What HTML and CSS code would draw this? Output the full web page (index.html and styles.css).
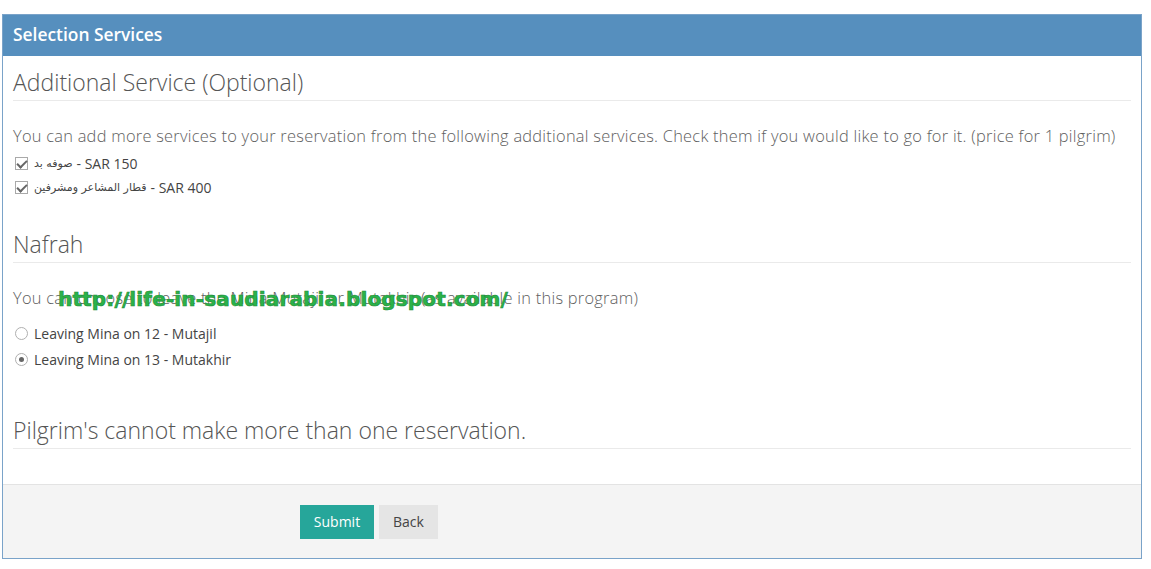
FILE: index.html
```html
<!DOCTYPE html>
<html lang="en">
<head>
  <meta charset="UTF-8">
  <title>Selection Services</title>
  <link rel="stylesheet" href="styles.css">
</head>
<body>
  <form class="panel">
    <div class="panel-heading">Selection Services</div>

    <div class="panel-body">
      <h3 class="section-title">Additional Service (Optional)</h3>
      <p class="hint">You can add more services to your reservation from the following additional services. Check them if you would like to go for it. (price for 1 pilgrim)</p>
      <label class="option"><input type="checkbox" checked> <span class="ar" dir="rtl">صوفه بد</span> - SAR 150</label>
      <label class="option"><input type="checkbox" checked> <span class="ar" dir="rtl">قطار المشاعر ومشرفين</span> - SAR 400</label>

      <h3 class="section-title nafrah">Nafrah</h3>
      <div class="hint-wrap">
        <p class="hint">You can choose to leave the Mina Mutajil or Mutakhir (as available in this program)</p>
        <span class="watermark">http://life-in-saudiarabia.blogspot.com/</span>
      </div>
      <label class="option radio"><input type="radio" name="nafrah"> Leaving Mina on 12 - Mutajil</label>
      <label class="option radio"><input type="radio" name="nafrah" checked> Leaving Mina on 13 - Mutakhir</label>

      <h3 class="section-title notice">Pilgrim's cannot make more than one reservation.</h3>
    </div>

    <div class="panel-footer">
      <button type="submit" class="btn btn-submit">Submit</button>
      <button type="button" class="btn btn-back">Back</button>
    </div>
  </form>
</body>
</html>
```

FILE: styles.css
```css
* {
  margin: 0;
  padding: 0;
  box-sizing: border-box;
}

body {
  font-family: 'Open Sans', sans-serif;
  background: #fff;
  color: #555;
  padding: 14px 9px 0 2px;
}

.panel {
  border: 1px solid #7aa3c9;
  height: 545px;
  display: flex;
  flex-direction: column;
}

.panel-heading {
  background-color: #568fbe;
  color: #fff;
  font-size: 17.4px;
  font-weight: 600;
  height: 41px;
  line-height: 39px;
  padding-left: 10px;
}

.panel-body {
  flex: 1;
  padding: 8px 10px 0 10px;
}

.section-title {
  font-size: 23px;
  font-weight: 300;
  color: #555;
  line-height: 36px;
  border-bottom: 1px solid #eaeaea;
}

.hint {
  font-size: 16.4px;
  font-weight: 300;
  color: #5e5e5e;
  letter-spacing: 0.26px;
  line-height: 22px;
  margin-top: 24px;
  margin-bottom: 4px;
  white-space: nowrap;
}

.option {
  display: flex;
  align-items: center;
  font-size: 14px;
  height: 24px;
  color: #444;
  gap: 4px;
  padding-left: 2px;
}

.option .ar {
  font-family: 'DejaVu Sans', sans-serif;
  font-size: 11px;
}

/* flat grey boxes, like the old native controls */
.option input {
  appearance: none;
  -webkit-appearance: none;
  width: 13px;
  height: 13px;
  margin-right: 2px;
  border: 1px solid #a9a9a9;
  background: #fff;
  position: relative;
  flex-shrink: 0;
}

.option input[type="checkbox"]:checked::after {
  content: "";
  position: absolute;
  left: 3px;
  top: 0px;
  width: 4px;
  height: 8px;
  border: solid #666;
  border-width: 0 2px 2px 0;
  transform: rotate(45deg);
}

.option input[type="radio"] {
  border-radius: 50%;
  border-color: #b0b0b0;
}

.option input[type="radio"]:checked::after {
  content: "";
  position: absolute;
  left: 3px;
  top: 3px;
  width: 5px;
  height: 5px;
  border-radius: 50%;
  background: #666;
}

.option.radio {
  height: 26px;
}

.nafrah {
  margin-top: 27px;
}

.hint-wrap {
  position: relative;
  margin-bottom: 11px;
}

.watermark {
  position: absolute;
  left: 45px;
  top: 0;
  font-family: 'DejaVu Sans', sans-serif;
  font-weight: bold;
  font-size: 20px;
  color: #2ab24a;
  -webkit-text-stroke: 0.6px #1f8c35;
  letter-spacing: 0.15px;
  white-space: nowrap;
}

.notice {
  margin-top: 40px;
}

.panel-footer {
  height: 74px;
  background: #f4f4f4;
  border-top: 1px solid #e3e3e3;
  display: flex;
  align-items: flex-start;
  gap: 5px;
  padding: 20px 0 0 297px;
}

.btn {
  font-family: 'Open Sans', sans-serif;
  font-size: 14px;
  height: 34px;
  line-height: 32px;
  border: none;
  cursor: pointer;
}

.btn-submit {
  background: #26a69a;
  color: #fff;
  width: 74px;
}

.btn-back {
  background: #e5e5e5;
  color: #444;
  width: 59px;
}
```
